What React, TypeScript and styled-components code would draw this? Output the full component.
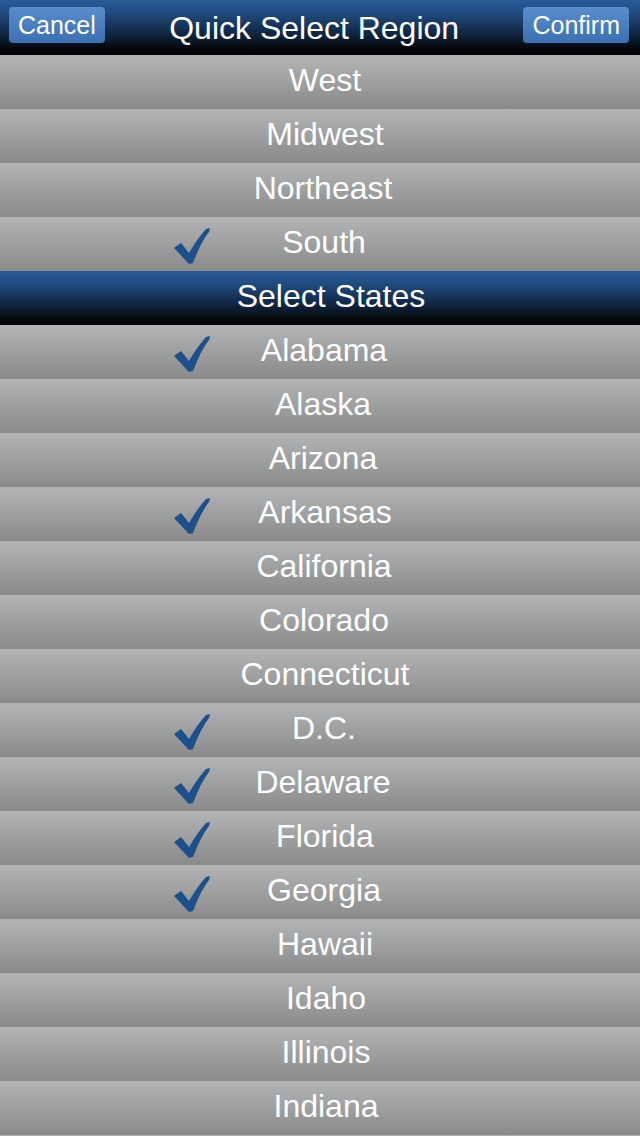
import React from "react";
import styled, { createGlobalStyle } from "styled-components";

const Global = createGlobalStyle`
  html, body { margin: 0; padding: 0; background: #b1b2b4; }
  body { font-family: "Liberation Sans", Arial, Helvetica, sans-serif; -webkit-font-smoothing: antialiased; }
`;

const Page = styled.div`
  display: flex;
  flex-direction: column;
  width: 640px;
`;

const headerBg = `linear-gradient(to bottom, #2b5c99 0%, #204a7d 25%, #112744 60%, #040609 90%, #020304 100%)`;

const TopBar = styled.header`
  display: flex;
  justify-content: space-between;
  align-items: flex-start;
  height: 55px;
  box-sizing: border-box;
  padding: 7px 11px 0 9px;
  background: ${headerBg};
`;

const BarButton = styled.button`
  height: 36px;
  padding: 0 9px;
  border: none;
  border-radius: 4px;
  background: linear-gradient(to bottom, #5a8dcc 0%, #4a7ebf 50%, #3d70b0 100%);
  color: #fff;
  font-family: inherit;
  font-size: 25px;
  line-height: 36px;
  cursor: pointer;
`;

const Title = styled.h1`
  margin: 0;
  align-self: center;
  padding-bottom: 7px;
  color: #fff;
  font-size: 32px;
  font-weight: normal;
  line-height: 40px;
  white-space: nowrap;
`;

const SectionHeader = styled.div`
  display: flex;
  align-items: center;
  justify-content: center;
  height: 54px;
  padding-left: 22px;
  padding-bottom: 4px;
  box-sizing: border-box;
  background: ${headerBg};
  color: #fff;
  font-size: 32px;
`;

const Row = styled.div`
  display: grid;
  grid-template-areas: "cell";
  align-items: center;
  height: 54px;
  box-sizing: border-box;
  background: linear-gradient(to bottom, #b3b4b6 0%, #a2a3a4 40%, #8a8a8a 100%);
`;

const Label = styled.span<{ $shift: number }>`
  grid-area: cell;
  justify-self: center;
  padding-left: ${(p) => 8 + p.$shift * 2}px;
  padding-bottom: 4px;
  color: #fff;
  font-size: 32px;
  line-height: 40px;
`;

const CheckBox = styled.span`
  grid-area: cell;
  justify-self: start;
  display: flex;
  margin-left: 174px;
  margin-top: 3px;
  width: 36px;
  height: 36px;
`;

const Check = () => (
  <svg width="36" height="36" viewBox="0 0 36 36">
    <path
      d="M0 20 L7 15 L15 25 Q23 11 32 1 L36 0 L35 4 Q27 14 19 35 L15 36 Z"
      fill="#1d4f8b"
    />
  </svg>
);

type Item = { name: string; checked?: boolean; shift?: number };

const regions: Item[] = [
  { name: "West", shift: 1 },
  { name: "Midwest", shift: 1 },
  { name: "Northeast", shift: -1 },
  { name: "South", checked: true, shift: 0 },
];

const states: Item[] = [
  { name: "Alabama", checked: true },
  { name: "Alaska", shift: -1 },
  { name: "Arizona", shift: -1 },
  { name: "Arkansas", checked: true, shift: 1 },
  { name: "California" },
  { name: "Colorado" },
  { name: "Connecticut", shift: 1 },
  { name: "D.C.", checked: true },
  { name: "Delaware", checked: true, shift: -1 },
  { name: "Florida", checked: true, shift: 1 },
  { name: "Georgia", checked: true },
  { name: "Hawaii", shift: 1 },
  { name: "Idaho", shift: 2 },
  { name: "Illinois", shift: 2 },
  { name: "Indiana", shift: 2 },
];

const ListRow = ({ item }: { item: Item }) => (
  <Row>
    {item.checked && (
      <CheckBox>
        <Check />
      </CheckBox>
    )}
    <Label $shift={item.shift ?? 0}>{item.name}</Label>
  </Row>
);

export default function App() {
  return (
    <Page>
      <Global />
      <TopBar>
        <BarButton>Cancel</BarButton>
        <Title>Quick Select Region</Title>
        <BarButton>Confirm</BarButton>
      </TopBar>
      {regions.map((r) => (
        <ListRow key={r.name} item={r} />
      ))}
      <SectionHeader>Select States</SectionHeader>
      {states.map((s) => (
        <ListRow key={s.name} item={s} />
      ))}
    </Page>
  );
}
